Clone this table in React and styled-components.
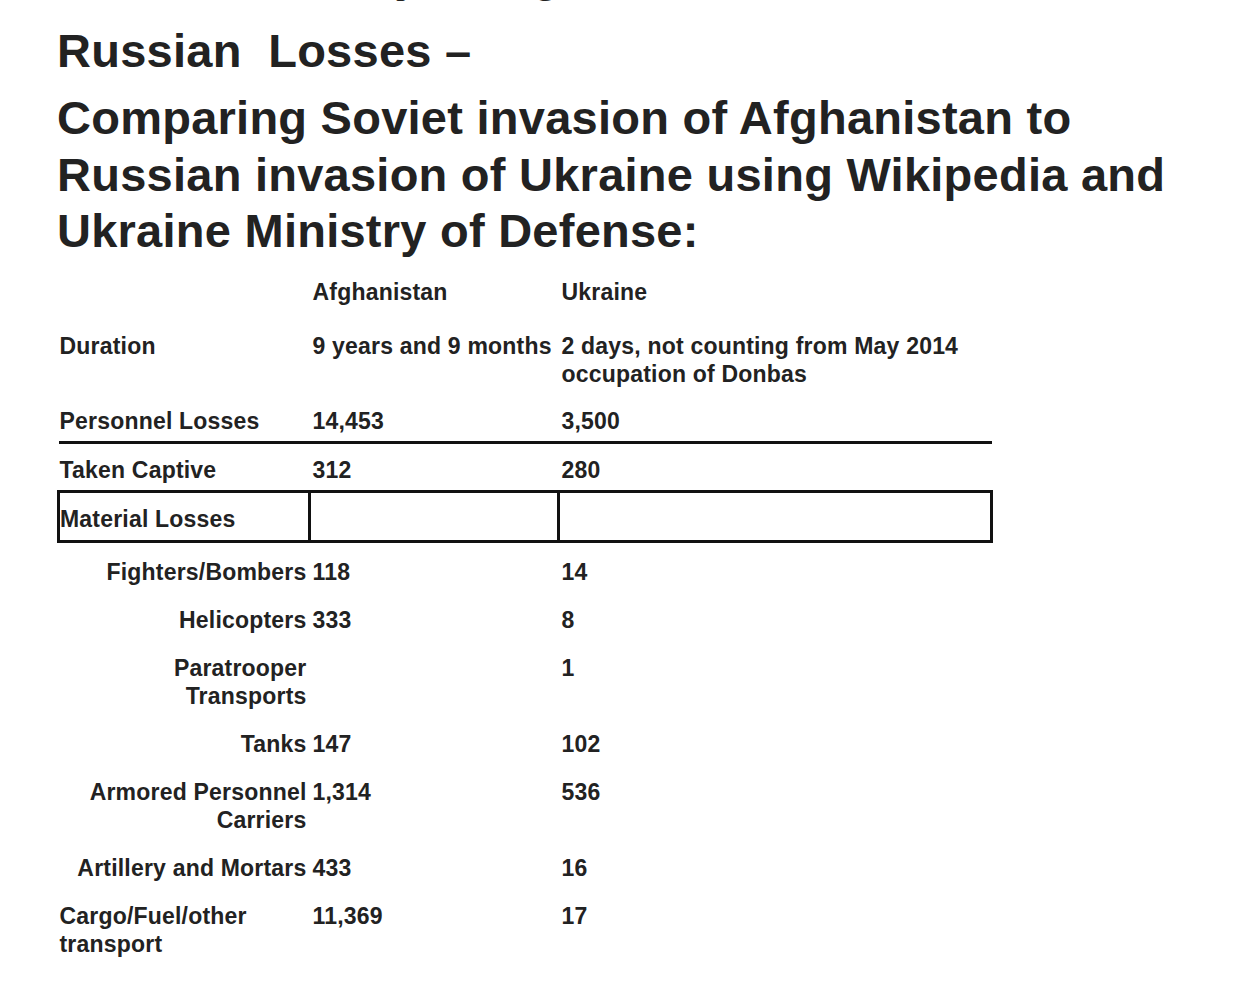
import styled, { createGlobalStyle } from "styled-components";

const GlobalStyle = createGlobalStyle`
    html, body {
        margin: 0;
        padding: 0;
        background: #ffffff;
        overflow: hidden;
    }

    body {
        font-family: "Liberation Sans", Arial, Helvetica, sans-serif;
        color: #222222;
    }
`;

const Page = styled.main`
    padding: 0 0 40px 57px;
    font-weight: bold;
`;

const ClippedLine = styled.div`
    font-size: 47px;
    line-height: 47px;
    margin-top: -49px;
    letter-spacing: 0.25px;
    white-space: nowrap;
`;

const Title = styled.h1`
    font-size: 47px;
    line-height: 56.5px;
    font-weight: bold;
    letter-spacing: 0.25px;
    margin: 25px 0 0;
`;

const Subtitle = styled.h2`
    font-size: 47px;
    line-height: 56.5px;
    font-weight: bold;
    letter-spacing: 0.25px;
    width: 1150px;
    margin: 10.5px 0 0;
`;

const Table = styled.table`
    border-collapse: collapse;
    table-layout: fixed;
    width: 933px;
    margin-top: 8px;
    font-size: 23px;
    line-height: 28px;
    letter-spacing: 0.2px;

    & td {
        vertical-align: top;
        padding: 10px 0 10px 3px;
    }

    & td:first-child {
        padding-left: 1px;
    }
`;

const Row = styled.tr`
    & > td {
        padding-top: ${p => p.$top ?? 10}px;
        padding-bottom: ${p => p.$bottom ?? 10}px;
        border-bottom: ${p => (p.$ruled ? "3px solid #111" : "none")};
    }
`;

const BoxRow = styled.tr`
    & > td {
        border: 3px solid #111;
        padding-top: 12px;
        padding-bottom: 7px;
    }

    & > td:first-child {
        padding-left: 0;
    }
`;

const Label = styled.td`
    && {
        text-align: ${p => (p.$right ? "right" : "left")};
        padding-right: ${p => (p.$right ? 3 : 0)}px;
    }
`;

const Value = styled.td`
    white-space: ${p => (p.$nowrap ? "nowrap" : "normal")};
`;

const materials = [
    { label: "Fighters/Bombers", afg: "118", ukr: "14" },
    { label: "Helicopters", afg: "333", ukr: "8" },
    { label: "Paratrooper Transports", afg: "", ukr: "1" },
    { label: "Tanks", afg: "147", ukr: "102" },
    { label: "Armored Personnel Carriers", afg: "1,314", ukr: "536" },
    { label: "Artillery and Mortars", afg: "433", ukr: "16" },
    { label: "Cargo/Fuel/other transport", afg: "11,369", ukr: "17", left: true },
];

export default function App() {
    return (
        <Page>
            <GlobalStyle />
            <ClippedLine>Tallied each day using</ClippedLine>
            <Title>Russian&nbsp; Losses –</Title>
            <Subtitle>
                Comparing Soviet invasion of Afghanistan to Russian invasion of
                Ukraine using Wikipedia and Ukraine Ministry of Defense:
            </Subtitle>
            <Table>
                <colgroup>
                    <col style={{ width: 251 }} />
                    <col style={{ width: 249 }} />
                    <col style={{ width: 433 }} />
                </colgroup>
                <tbody>
                    <Row $bottom={16}>
                        <Label />
                        <Value>Afghanistan</Value>
                        <Value>Ukraine</Value>
                    </Row>
                    <Row>
                        <Label>Duration</Label>
                        <Value $nowrap>9 years and 9 months</Value>
                        <Value>2 days, not counting from May 2014 occupation of Donbas</Value>
                    </Row>
                    <Row $top={9} $bottom={6} $ruled>
                        <Label>Personnel Losses</Label>
                        <Value>14,453</Value>
                        <Value>3,500</Value>
                    </Row>
                    <Row $top={12} $bottom={6}>
                        <Label>Taken Captive</Label>
                        <Value>312</Value>
                        <Value>280</Value>
                    </Row>
                    <BoxRow>
                        <Label>Material Losses</Label>
                        <Value />
                        <Value />
                    </BoxRow>
                    {materials.map((m, i) => (
                        <Row key={m.label} $top={i === 0 ? 15 : 10}>
                            <Label $right={!m.left}>{m.label}</Label>
                            <Value>{m.afg}</Value>
                            <Value>{m.ukr}</Value>
                        </Row>
                    ))}
                </tbody>
            </Table>
        </Page>
    );
}
